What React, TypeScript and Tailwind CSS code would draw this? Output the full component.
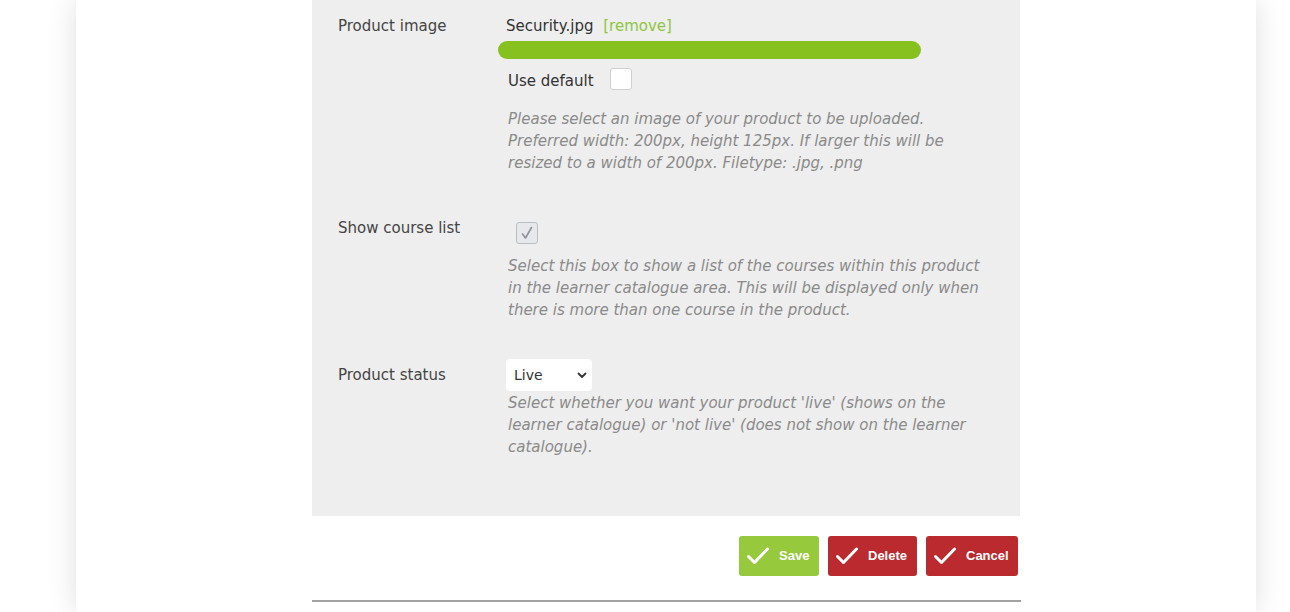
import { useState } from "react";

const font = { fontFamily: '"DejaVu Sans", Verdana, sans-serif' };

function CheckMark() {
    return (
        <svg width="22" height="18" viewBox="0 0 22 18" fill="none">
            <path d="M1.5 9.5 L7.5 15.5 L20.5 2" stroke="white" strokeWidth="3" strokeLinecap="round" strokeLinejoin="round" />
        </svg>
    );
}

function ActionButton({ label, tone, width }: { label: string; tone: "green" | "red"; width: string }) {
    return (
        <button
            className={
                "flex h-10 items-center gap-[10px] rounded-[3px] pl-2 text-[13px] font-bold text-white " +
                width + " " +
                (tone === "green" ? "bg-[#97c93d]" : "bg-[#ba2a2e]")
            }
            style={{ fontFamily: '"Liberation Sans", Arial, sans-serif' }}
        >
            <CheckMark />
            <span>{label}</span>
        </button>
    );
}

function Row({ label, children, className = "" }: { label: string; children: React.ReactNode; className?: string }) {
    return (
        <div className={"flex " + className}>
            <div className="w-[194px] shrink-0 pl-[26px] leading-[22px] text-[#444]">{label}</div>
            <div className="flex-1 pr-[30px]">{children}</div>
        </div>
    );
}

const hint = "pl-[2px] italic leading-[22px] text-[#8a8a8a]";

export default function App() {
    const [useDefault, setUseDefault] = useState(false);
    const [status, setStatus] = useState("Live");

    return (
        <div className="min-h-[612px] w-full overflow-hidden bg-white">
            <div className="ml-[76px] min-h-[612px] w-[1180px] bg-white shadow-[0_0_28px_rgba(0,0,0,0.13)]">
                <div className="ml-[236px] w-[708px]">
                    <div className="bg-[#eeeeee] pt-[15px] pb-[58px] text-[15px]" style={font}>
                        <Row label="Product image">
                            <div className="leading-[22px] text-[#333]">
                                Security.jpg <span className="ml-[5px] text-[#8dc63f]">[remove]</span>
                            </div>
                            <div className="-ml-2 mt-[4px] h-[18px] w-[423px] rounded-full bg-[#86c11f]" />
                            <div className="mt-[9px] flex items-start pl-[2px]">
                                <span className="pt-[2px] leading-[22px] text-[#333]">Use default</span>
                                <button
                                    onClick={() => setUseDefault(!useDefault)}
                                    className="ml-[16px] h-[22px] w-[22px] rounded-[3px] border border-[#cfcfcf] bg-white"
                                />
                            </div>
                            <p className={hint + " mt-[16px]"}>
                                Please select an image of your product to be uploaded. Preferred width: 200px, height 125px. If larger this will be resized to a width of 200px. Filetype: .jpg, .png
                            </p>
                        </Row>

                        <Row label="Show course list" className="mt-[43px]">
                            <div className="ml-[10px] mt-[5px] flex h-[22px] w-[22px] items-center justify-center rounded-[3px] border border-[#b9bdc2] bg-[#e6e8eb]">
                                <svg width="14" height="14" viewBox="0 0 14 14" fill="none">
                                    <path d="M2.5 8 L5.5 12 L11.5 1.5" stroke="#8e9297" strokeWidth="1.6" strokeLinecap="round" strokeLinejoin="round" />
                                </svg>
                            </div>
                            <p className={hint + " mt-[11px]"}>
                                Select this box to show a list of the courses within this product in the learner catalogue area. This will be displayed only when there is more than one course in the product.
                            </p>
                        </Row>

                        <Row label="Product status" className="mt-[43px]">
                            <div className="relative -mt-[5px] h-8 w-[86px]">
                                <select
                                    value={status}
                                    onChange={e => setStatus(e.target.value)}
                                    className="h-8 w-[86px] appearance-none rounded-[4px] bg-white pl-2 text-[14px] text-[#333] outline-none"
                                    style={font}
                                >
                                    <option>Live</option>
                                    <option>Not live</option>
                                </select>
                                <svg className="pointer-events-none absolute right-[5px] top-[13px]" width="10" height="7" viewBox="0 0 10 7" fill="none">
                                    <path d="M1.5 1.5 L5 5 L8.5 1.5" stroke="#333" strokeWidth="1.8" strokeLinecap="round" strokeLinejoin="round" />
                                </svg>
                            </div>
                            <p className={hint + " mt-[1px]"}>
                                Select whether you want your product 'live' (shows on the learner catalogue) or 'not live' (does not show on the learner catalogue).
                            </p>
                        </Row>
                    </div>

                    <div className="flex justify-end gap-[9px] pr-[2px] pt-5">
                        <ActionButton label="Save" tone="green" width="w-[80px]" />
                        <ActionButton label="Delete" tone="red" width="w-[89px]" />
                        <ActionButton label="Cancel" tone="red" width="w-[92px]" />
                    </div>

                    <div className="mt-6 h-[2px] w-[709px] bg-[#a3a3a3]" />
                </div>
            </div>
        </div>
    );
}
